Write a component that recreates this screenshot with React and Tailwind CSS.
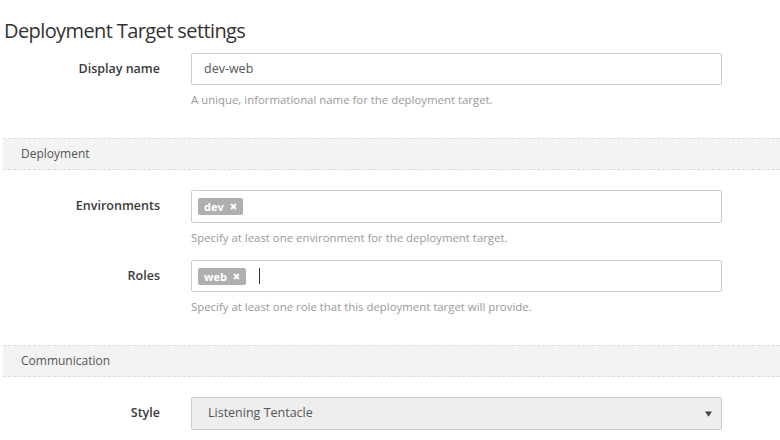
import React from "react";

function Chip({ label }) {
  return (
    <span className="inline-flex items-center gap-[6px] h-[17px] px-[6px] rounded-[2px] bg-[#afafaf] text-white text-[11px] font-bold leading-none">
      {label}
      <svg viewBox="0 0 10 10" className="w-[7px] h-[7px]" fill="none">
        <path d="M1.5 1.5 8.5 8.5M8.5 1.5 1.5 8.5" stroke="white" strokeWidth="2.8" />
      </svg>
    </span>
  );
}

function Field({ label, children, help, className = "" }) {
  return (
    <div className={className}>
      <div className="flex items-center">
        <label className="w-[160px] shrink-0 text-right text-[12.5px] font-semibold text-[#3a3a3a]">
          {label}
        </label>
        <div className="ml-[31px] w-[531px]">{children}</div>
      </div>
      {help && (
        <p className="ml-[191px] mt-[7px] text-[11.4px] leading-[16px] text-[#999]">{help}</p>
      )}
    </div>
  );
}

function Band({ title, className = "" }) {
  return (
    <div
      className={`ml-[3px] h-[32px] flex items-center pl-[18px] bg-[#f3f3f3] border-y border-dashed border-[#dcdcdc] text-[12px] text-[#555] ${className}`}
    >
      {title}
    </div>
  );
}

export default function App() {
  return (
    <div className="w-[780px] h-[440px] overflow-hidden bg-white font-['Open_Sans',sans-serif]">
      <h1 className="pl-[4px] pt-[18px] text-[20px] leading-[26px] text-[#333] tracking-[-0.6px]">
        Deployment Target settings
      </h1>

      <Field
        label="Display name"
        help="A unique, informational name for the deployment target."
        className="mt-[9px]"
      >
        <div className="h-[32px] flex items-center px-[12px] border border-[#ccc] rounded-[2px] text-[12.5px] text-[#555]">
          dev-web
        </div>
      </Field>

      <Band title="Deployment" className="mt-[30px]" />

      <Field
        label="Environments"
        help="Specify at least one environment for the deployment target."
        className="mt-[20px]"
      >
        <div className="h-[33px] flex items-center px-[6px] border border-[#ccc] rounded-[2px]">
          <Chip label="dev" />
        </div>
      </Field>

      <Field
        label="Roles"
        help="Specify at least one role that this deployment target will provide."
        className="mt-[14px]"
      >
        <div className="h-[32px] flex items-center px-[6px] border border-[#ccc] rounded-[2px]">
          <Chip label="web" />
          <span className="ml-[13px] w-px h-[16px] bg-[#333]" />
        </div>
      </Field>

      <Band title="Communication" className="mt-[30px]" />

      <Field label="Style" className="mt-[20px]">
        <div className="h-[33px] flex items-center justify-between pl-[16px] pr-[9px] bg-[#eee] border border-[#ccc] rounded-[2px] text-[12.5px] text-[#555]">
          Listening Tentacle
          <svg viewBox="0 0 8 6" className="w-[7px] h-[6px]">
            <path d="M0 0H8L4 6Z" fill="#444" />
          </svg>
        </div>
      </Field>
    </div>
  );
}
